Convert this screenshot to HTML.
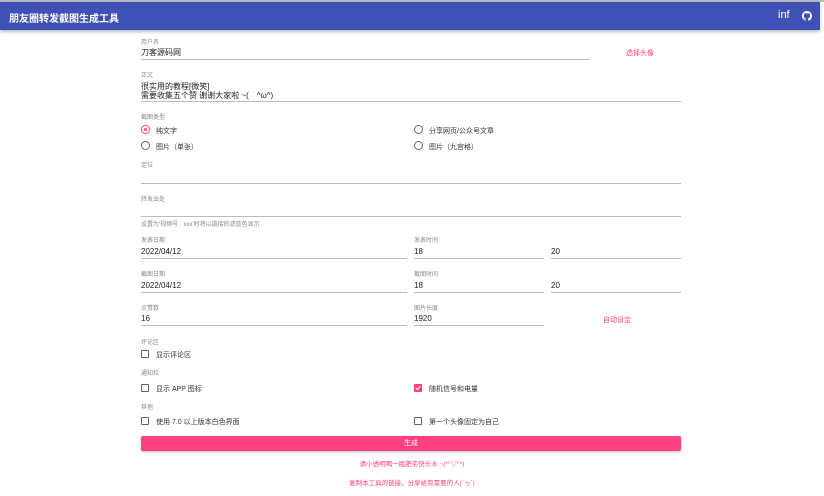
<!DOCTYPE html>
<html><head><meta charset="utf-8"><style>
*{margin:0;padding:0;box-sizing:border-box}
body{width:824px;height:496px;background:#fff;font-family:"Liberation Sans","Noto Sans CJK SC",sans-serif;position:relative;overflow:hidden;color:#222}
.hdr{position:absolute;left:0;top:2px;width:820px;height:28px;background:#3f51b5;box-shadow:0 2px 3px rgba(0,0,0,.25)}
.topline{position:absolute;left:0;top:0;width:824px;height:2px;background:#bbb}
.t{position:absolute;white-space:nowrap}
.lab{font-size:6px;color:#888}
.val{font-size:8px;color:#222}
.ul{position:absolute;height:1px;background:#bbb}
.pink{color:#ff4081;font-size:7px}
.rad{position:absolute;width:9px;height:9px;border:1.3px solid #666;border-radius:50%}
.rad.on{border-color:#ff4081}
.rad.on::after{content:"";position:absolute;left:1.5px;top:1.5px;width:3.5px;height:3.5px;border-radius:50%;background:#ff4081}
.cb{position:absolute;width:8px;height:8px;border:1.3px solid #666;border-radius:1px}
.cb.on{background:#ff4081;border-color:#ff4081}
.opt{font-size:7px;color:#333}
</style></head><body>
<div class="topline"></div>
<div class="hdr">
<div class="t" style="left:9px;top:8px;font-size:10px;color:#fff;font-weight:bold">朋友圈转发截图生成工具</div>
<div class="t" style="left:778px;top:7px;font-size:11px;color:#fff">inf&#8203;</div>
<svg style="position:absolute;left:802px;top:9px" width="10" height="10" viewBox="0 0 16 16"><path fill="#fff" d="M8 0C3.6 0 0 3.6 0 8c0 3.5 2.3 6.5 5.5 7.6.4.1.5-.2.5-.4v-1.4c-2.2.5-2.7-1-2.7-1-.4-.9-.9-1.2-.9-1.2-.7-.5.1-.5.1-.5.8.1 1.2.8 1.2.8.7 1.2 1.9.9 2.3.7.1-.5.3-.9.5-1.1-1.8-.2-3.6-.9-3.6-4 0-.9.3-1.6.8-2.1-.1-.2-.4-1 .1-2.1 0 0 .7-.2 2.2.8.6-.2 1.3-.3 2-.3s1.4.1 2 .3c1.5-1 2.2-.8 2.2-.8.4 1.1.2 1.900.1 2.1.5.6.8 1.3.8 2.1 0 3.1-1.9 3.700-3.6 3.900.3.3.5.8.5 1.5v2.2c0 .2.1.5.6.4C13.700 14.500 16 11.500 16 8c0-4.400-3.600-8-8-8z"/></svg>
</div>

<div class="t lab" style="left:141px;top:37px">用户名</div>
<div class="t val" style="left:141px;top:47px">刀客源码网</div>
<div class="ul" style="left:141px;top:59px;width:449px"></div>
<div class="t pink" style="left:626px;top:48px">选择头像</div>

<div class="t lab" style="left:141px;top:70px">正文</div>
<div class="t val" style="left:141px;top:81px">很实用的教程[微笑]</div>
<div class="t val" style="left:141px;top:90px">需要收集五个赞 谢谢大家啦 ~(　^ω^)</div>
<div class="ul" style="left:141px;top:101px;width:540px"></div>

<div class="t lab" style="left:141px;top:112px">截图类型</div>
<div class="rad on" style="left:141px;top:125px"></div>
<div class="t opt" style="left:156px;top:126px">纯文字</div>
<div class="rad" style="left:141px;top:141px"></div>
<div class="t opt" style="left:156px;top:142px">图片（单张）</div>
<div class="rad" style="left:414px;top:125px"></div>
<div class="t opt" style="left:429px;top:126px">分享网页/公众号文章</div>
<div class="rad" style="left:414px;top:141px"></div>
<div class="t opt" style="left:429px;top:142px">图片（九宫格）</div>

<div class="t lab" style="left:141px;top:160px">定位</div>
<div class="ul" style="left:141px;top:183px;width:540px"></div>
<div class="t lab" style="left:141px;top:194px">转发出处</div>
<div class="ul" style="left:141px;top:216px;width:540px"></div>
<div class="t lab" style="left:141px;top:219px">设置为'视频号 · xxx'时将以链接的滤蓝色显示</div>

<div class="t lab" style="left:141px;top:235px">发表日期</div>
<div class="t val" style="left:141px;top:247px">2022/04/12</div>
<div class="ul" style="left:141px;top:258px;width:266px"></div>
<div class="t lab" style="left:414px;top:235px">发表时间</div>
<div class="t val" style="left:414px;top:247px">18</div>
<div class="ul" style="left:414px;top:258px;width:130px"></div>
<div class="t val" style="left:551px;top:247px">20</div>
<div class="ul" style="left:551px;top:258px;width:130px"></div>

<div class="t lab" style="left:141px;top:269px">截图日期</div>
<div class="t val" style="left:141px;top:281px">2022/04/12</div>
<div class="ul" style="left:141px;top:292px;width:266px"></div>
<div class="t lab" style="left:414px;top:269px">截图时间</div>
<div class="t val" style="left:414px;top:281px">18</div>
<div class="ul" style="left:414px;top:292px;width:130px"></div>
<div class="t val" style="left:551px;top:281px">20</div>
<div class="ul" style="left:551px;top:292px;width:130px"></div>

<div class="t lab" style="left:141px;top:303px">点赞数</div>
<div class="t val" style="left:141px;top:314px">16</div>
<div class="ul" style="left:141px;top:325px;width:266px"></div>
<div class="t lab" style="left:414px;top:303px">图片长度</div>
<div class="t val" style="left:414px;top:314px">1920</div>
<div class="ul" style="left:414px;top:325px;width:130px"></div>
<div class="t pink" style="left:603px;top:315px">自动设定</div>

<div class="t lab" style="left:141px;top:337px">评论区</div>
<div class="cb" style="left:141px;top:350px"></div>
<div class="t opt" style="left:156px;top:350px">显示评论区</div>

<div class="t lab" style="left:141px;top:368px">通知栏</div>
<div class="cb" style="left:141px;top:384px"></div>
<div class="t opt" style="left:156px;top:384px">显示 APP 图标</div>
<div class="cb on" style="left:414px;top:384px"><svg style="position:absolute;left:0;top:0" width="6" height="6" viewBox="0 0 6 6"><path d="M0.8 3 L2.4 4.6 L5.2 1.2" stroke="#fff" stroke-width="1.1" fill="none"/></svg></div>
<div class="t opt" style="left:429px;top:384px">随机信号和电量</div>

<div class="t lab" style="left:141px;top:402px">其他</div>
<div class="cb" style="left:141px;top:417px"></div>
<div class="t opt" style="left:156px;top:417px">使用 7.0 以上版本白色界面</div>
<div class="cb" style="left:414px;top:417px"></div>
<div class="t opt" style="left:429px;top:417px">第一个头像固定为自己</div>

<div style="position:absolute;left:141px;top:436px;width:540px;height:15px;background:#ff4081;border-radius:2px;box-shadow:0 1px 2px rgba(0,0,0,.25);color:#fff;font-size:7px;text-align:center;line-height:15px">生成</div>
<div class="t pink" style="left:0;width:824px;text-align:center;top:458px;font-size:6.5px">请小透明喝一瓶肥宅快乐水 ~(*°▽°*)</div>
<div class="t pink" style="left:0;width:824px;text-align:center;top:477px;font-size:6.5px">复制本工具的链接，分享给有需要的人(´っ`)</div>
</body></html>
